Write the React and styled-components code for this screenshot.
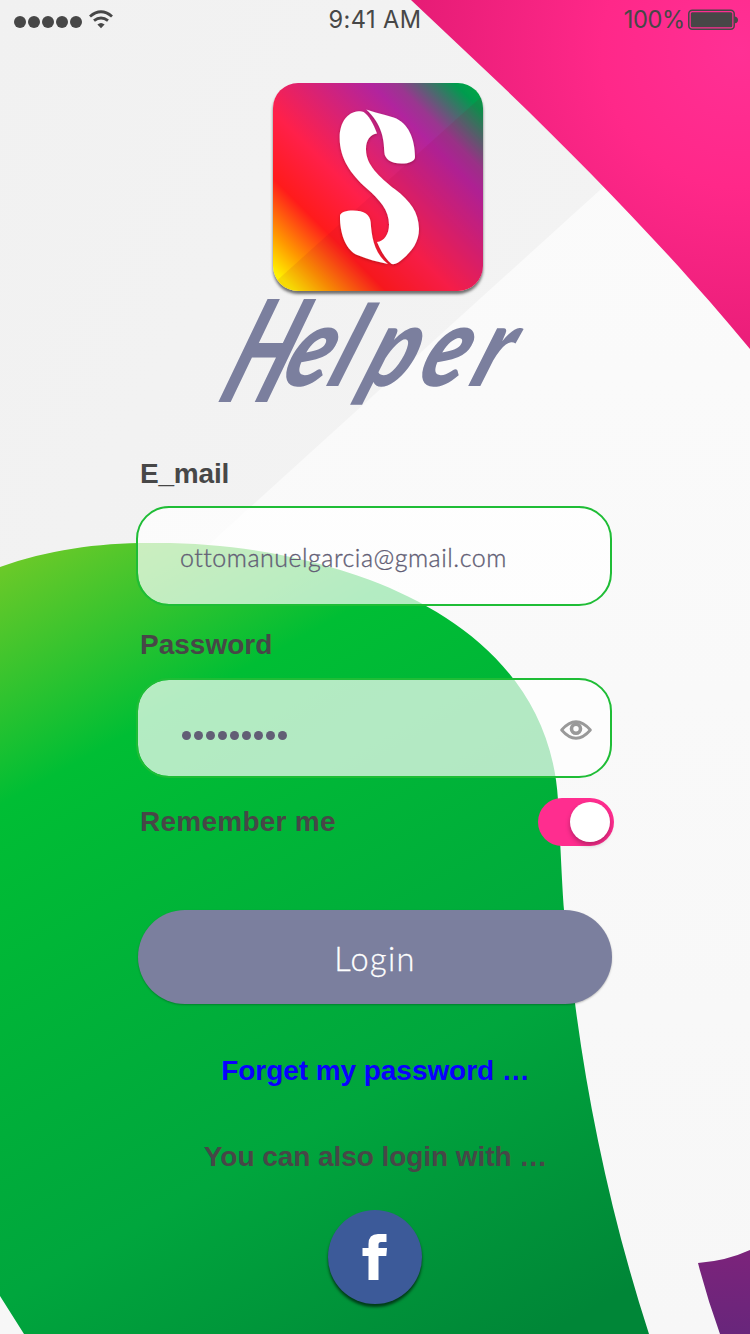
import React, { useState } from 'react';
import styled, { createGlobalStyle } from 'styled-components';

const GlobalStyle = createGlobalStyle`
  *, *::before, *::after { box-sizing: border-box; }
  body { margin: 0; background: #f8f8f8; }
  button { border: 0; padding: 0; background: none; font: inherit; cursor: pointer; }
`;

const Screen = styled.main`
  position: relative;
  width: 750px;
  height: 1334px;
  overflow: hidden;
  font-family: 'Liberation Sans', Arial, sans-serif;
  color: #474747;
`;

const BackdropArt = styled.svg`
  position: absolute;
  inset: 0;
  display: block;
`;

const Content = styled.div`
  position: relative;
  display: flex;
  flex-direction: column;
  align-items: center;
`;

const StatusBar = styled.header`
  display: grid;
  grid-template-columns: 1fr auto 1fr;
  align-items: center;
  width: 100%;
  height: 40px;
  padding: 0 12px 0 14px;
  font: 400 23.6px/40px Inter, sans-serif;
`;

const StatusGroup = styled.div`
  display: flex;
  align-items: center;
  justify-content: ${(p) => (p.$end ? 'flex-end' : 'flex-start')};
  gap: ${(p) => (p.$end ? '3px' : '6px')};
  height: 40px;
`;

const SignalDots = styled.div`
  display: flex;
  gap: 2px;
  padding-top: 4px;
`;

const SignalDot = styled.i`
  width: 12px;
  height: 12px;
  border-radius: 50%;
  background: #474747;
`;

const Clock = styled.time`
  padding-right: 2px;
  letter-spacing: 0.4px;
`;

const Percent = styled.span`
  letter-spacing: -0.3px;
`;

const LogoArt = styled.svg`
  display: block;
  width: 210px;
  height: 208px;
  margin: 43px 0 0 6px;
  border-radius: 25px;
  box-shadow: 0 3px 3px rgba(0, 0, 0, 0.55);
`;

const Wordmark = styled.svg`
  display: block;
  width: 330px;
  height: 124px;
  margin: -1px 0 0;
  overflow: visible;
`;

const WordmarkText = styled.text`
  font: italic 900 112px Lato, sans-serif;
  fill: #7b7f9e;
`;

const WordmarkCapital = styled.tspan`
  font-size: 142px;
`;

const Form = styled.form`
  display: flex;
  flex-direction: column;
  align-items: stretch;
  width: 476px;
  margin: 43px 0 0 -2px;
`;

const Label = styled.label`
  display: block;
  height: 34px;
  padding-left: 4px;
  font-size: 28px;
  font-weight: 700;
  line-height: 34px;
  letter-spacing: ${(p) => p.$tracking || '0'};
  white-space: nowrap;
`;

const FieldGroup = styled.div`
  display: flex;
  flex-direction: column;
  gap: ${(p) => p.$gap};
  margin-top: ${(p) => p.$top || '0'};
`;

const Field = styled.div`
  display: flex;
  align-items: center;
  justify-content: space-between;
  height: 100px;
  padding: 0 17px 0 42px;
  border: 2px solid #1fbd36;
  border-radius: 33px;
  background: rgba(255, 255, 255, 0.7);
  background-clip: padding-box;
  color: #625e75;
`;

const EmailText = styled.span`
  padding-top: 2px;
  font: 300 25px/34px Lato, sans-serif;
  letter-spacing: 0.5px;
  -webkit-text-stroke: 0.35px currentColor;
`;

const Mask = styled.div`
  display: flex;
  gap: 3px;
  padding: 15px 0 0 2px;
`;

const MaskDot = styled.i`
  width: 9px;
  height: 9px;
  border-radius: 50%;
  background: #625e75;
`;

const EyeIcon = styled.svg`
  display: block;
  width: 34px;
  height: 24px;
  margin-top: 3px;
`;

const RememberRow = styled.div`
  display: flex;
  align-items: center;
  justify-content: space-between;
  width: 478px;
  height: 48px;
  margin-top: 20px;
`;

const Toggle = styled.button`
  display: flex;
  align-items: center;
  justify-content: ${(p) => (p.$on ? 'flex-end' : 'flex-start')};
  width: 76px;
  height: 48px;
  padding: 0 4px;
  border-radius: 24px;
  background: ${(p) => (p.$on ? '#ff2d8f' : '#c7c7cc')};
`;

const Knob = styled.span`
  width: 40px;
  height: 40px;
  border-radius: 50%;
  background: #fff;
  box-shadow: 0 3px 5px rgba(0, 0, 0, 0.28);
`;

const LoginButton = styled.button`
  width: 474px;
  height: 94px;
  margin: 64px 0 0 2px;
  padding-top: 2px;
  border-radius: 47px;
  background: #7b7f9e;
  box-shadow: 0 1px 2px rgba(0, 0, 0, 0.25);
  color: #fff;
  font: 300 32.5px/94px Lato, sans-serif;
  letter-spacing: 1.4px;
  -webkit-text-stroke: 0.3px currentColor;
`;

const TextLine = styled.p`
  height: 34px;
  margin: ${(p) => p.$top} 0 0;
  padding-left: 1px;
  color: ${(p) => p.$color || 'inherit'};
  font-size: 28px;
  font-weight: 700;
  line-height: 34px;
  letter-spacing: -0.06px;
  white-space: nowrap;
`;

const SocialButton = styled.button`
  display: flex;
  align-items: center;
  justify-content: center;
  width: 94px;
  height: 94px;
  margin-top: 36px;
  border-radius: 50%;
  background: #3c5a99;
  box-shadow: 0 3px 3px rgba(0, 0, 0, 0.6);
`;

function Backdrop() {
  return (
    <BackdropArt width="750" height="1334" viewBox="0 0 750 1334" aria-hidden="true">
      <defs>
        <linearGradient id="paper" x1="0" y1="0" x2="1" y2="1">
          <stop offset="0" stopColor="#f1f1f1" />
          <stop offset="1" stopColor="#f5f5f5" />
        </linearGradient>
        <linearGradient id="sheet" x1="0" y1="0" x2="0" y2="1">
          <stop offset="0" stopColor="#fbfbfb" />
          <stop offset="1" stopColor="#f7f7f7" />
        </linearGradient>
        <radialGradient id="pink" gradientUnits="userSpaceOnUse" cx="740" cy="50" r="345">
          <stop offset="0" stopColor="#ff3095" />
          <stop offset="0.4" stopColor="#ff2889" />
          <stop offset="1" stopColor="#e41b74" />
        </radialGradient>
        <linearGradient id="green" gradientUnits="userSpaceOnUse" x1="-50" y1="540" x2="430" y2="1400">
          <stop offset="0" stopColor="#84cc26" />
          <stop offset="0.26" stopColor="#00be34" />
          <stop offset="0.7" stopColor="#00a63d" />
          <stop offset="1" stopColor="#008637" />
        </linearGradient>
        <linearGradient id="purple" x1="0" y1="0" x2="0" y2="1">
          <stop offset="0" stopColor="#7c237b" />
          <stop offset="1" stopColor="#68267b" />
        </linearGradient>
      </defs>
      <rect width="750" height="1334" fill="url(#paper)" />
      <path d="M750 54 L0 734 V1334 H750 Z" fill="url(#sheet)" />
      <path d="M411 0 L500 84 C590 170 680 264 750 349 V0 Z" fill="url(#pink)" />
      <path
        d="M0 567 C48 550 96 543 150 543 C230 542 306 556 370 580 C460 614 551 680 558 800 C561 855 562 884 564 910 Q567 955 575 1003 C588 1105 612 1220 649 1334 H24 L0 1296 Z"
        fill="url(#green)"
      />
      <path d="M698 1263 Q726 1261 750 1250 V1334 H720 Q707 1298 698 1263 Z" fill="url(#purple)" />
    </BackdropArt>
  );
}

function Logo() {
  return (
    <LogoArt viewBox="54 38 630 625" preserveAspectRatio="none" role="img" aria-label="Helper logo">
      <defs>
        <linearGradient id="rainbow" gradientUnits="userSpaceOnUse" x1="54" y1="663" x2="682" y2="35">
          <stop offset="0.05" stopColor="#fff000" />
          <stop offset="0.14" stopColor="#ff9800" />
          <stop offset="0.27" stopColor="#ff1b1c" />
          <stop offset="0.43" stopColor="#ff204a" />
          <stop offset="0.73" stopColor="#b1249e" />
          <stop offset="0.79" stopColor="#9a3690" />
          <stop offset="0.93" stopColor="#009b4e" />
          <stop offset="1" stopColor="#00ad42" />
        </linearGradient>
        <filter id="soft" x="-10%" y="-10%" width="120%" height="120%">
          <feDropShadow dx="0" dy="3" stdDeviation="4" floodColor="#500" floodOpacity="0.4" />
        </filter>
      </defs>
      <rect x="54" y="38" width="630" height="625" fill="url(#rainbow)" />
      <path d="M54 642 L684 75 V663 H54 Z" fill="#a00030" fillOpacity="0.09" />
      <g fill="#fff" filter="url(#soft)">
        <path d="M311 123 C276 125 255 158 254 200 C253 265 288 312 332 352 C375 390 402 419 402 464 C402 491 388 514 366 516 C378 545 393 568 410 582 C421 584 432 577 443 567 C472 542 492 515 492 476 C491 426 466 393 421 358 C371 318 334 284 333 239 C332 212 345 192 366 190 C356 160 340 134 326 125 Q319 122 311 123 Z" />
        <path d="M334 118 Q347 122 362 127 Q390 134 416 142 C460 157 480 207 480 260 C480 272 463 280 439 280 C408 280 389 266 388 246 C387 207 381 162 334 118 Z" />
        <path d="M294 421 C328 421 345 434 347 456 C350 501 357 550 399 582 Q376 576 354 571 Q328 563 303 553 C269 535 254 483 255 437 C256 426 274 421 294 421 Z" />
      </g>
    </LogoArt>
  );
}

export default function App() {
  const [remember, setRemember] = useState(true);

  return (
    <>
      <GlobalStyle />
      <Screen>
        <Backdrop />
        <Content>
          <StatusBar>
            <StatusGroup>
              <SignalDots>
                {Array.from({ length: 5 }, (_, i) => (
                  <SignalDot key={i} />
                ))}
              </SignalDots>
              <svg width="26" height="20" viewBox="0 0 26 20" fill="none" stroke="#474747" strokeWidth="2.9" aria-hidden="true">
                <path d="M2 6.5 Q13 -2.9 24 6.5" />
                <path d="M6 10.7 Q13 5.2 20 10.7" />
                <path d="M9.4 14.5 Q13 11.4 16.6 14.5 L13 18.2 Z" fill="#474747" stroke="none" />
              </svg>
            </StatusGroup>
            <Clock>9:41 AM</Clock>
            <StatusGroup $end>
              <Percent>100%</Percent>
              <svg width="50" height="22" viewBox="0 0 50 22" aria-hidden="true">
                <rect x="0.8" y="1.3" width="45.4" height="19" rx="3.5" fill="none" stroke="#474747" strokeWidth="1.5" />
                <rect x="2.8" y="3.3" width="41.5" height="15" rx="1.5" fill="#474747" />
                <path d="M47 7.5 Q50 8 50 11 T47 14.2 Z" fill="#474747" />
              </svg>
            </StatusGroup>
          </StatusBar>

          <Logo />
          <Wordmark viewBox="210 290 330 124">
            <WordmarkText transform="translate(222 386) skewX(-22) scale(0.8 1)">
              <WordmarkCapital x="0" y="16" textLength="76" lengthAdjust="spacingAndGlyphs">H</WordmarkCapital>
              <tspan x="70 128 170 240 306" y="0">elper</tspan>
            </WordmarkText>
          </Wordmark>

          <Form onSubmit={(e) => e.preventDefault()}>
            <FieldGroup $gap="15px">
              <Label $tracking="-0.2px">E_mail</Label>
              <Field>
                <EmailText>ottomanuelgarcia@gmail.com</EmailText>
              </Field>
            </FieldGroup>
            <FieldGroup $gap="16px" $top="22px">
              <Label>Password</Label>
              <Field>
                <Mask>
                  {Array.from({ length: 9 }, (_, i) => (
                    <MaskDot key={i} />
                  ))}
                </Mask>
                <EyeIcon viewBox="0 0 34 24" fill="none" stroke="#999" aria-hidden="true">
                  <path d="M2.6 12 Q17 -4.5 31.4 12 Q17 28.5 2.6 12 Z" strokeWidth="2.8" strokeLinejoin="round" />
                  <circle cx="17" cy="10.8" r="4.5" strokeWidth="3.6" />
                </EyeIcon>
              </Field>
            </FieldGroup>
            <RememberRow>
              <Label $tracking="0.25px">Remember me</Label>
              <Toggle
                type="button"
                role="switch"
                aria-checked={remember}
                aria-label="Remember me"
                $on={remember}
                onClick={() => setRemember(!remember)}
              >
                <Knob />
              </Toggle>
            </RememberRow>
            <LoginButton type="submit">Login</LoginButton>
          </Form>

          <TextLine $top="50px" $color="#0a00ff">Forget my password …</TextLine>
          <TextLine $top="52px">You can also login with …</TextLine>
          <SocialButton type="button" aria-label="Login with Facebook">
            <svg width="26" height="48" viewBox="0 0 26 48" fill="#fff" aria-hidden="true">
              <path d="M6.5 47 V23 H0.5 V15 H6.5 V11 Q6.5 1 16 1 H24.5 V9 H19 Q16.5 9 16.5 11.5 V15 H25 L24.3 23 H16.5 V47 Z" />
            </svg>
          </SocialButton>
        </Content>
      </Screen>
    </>
  );
}
